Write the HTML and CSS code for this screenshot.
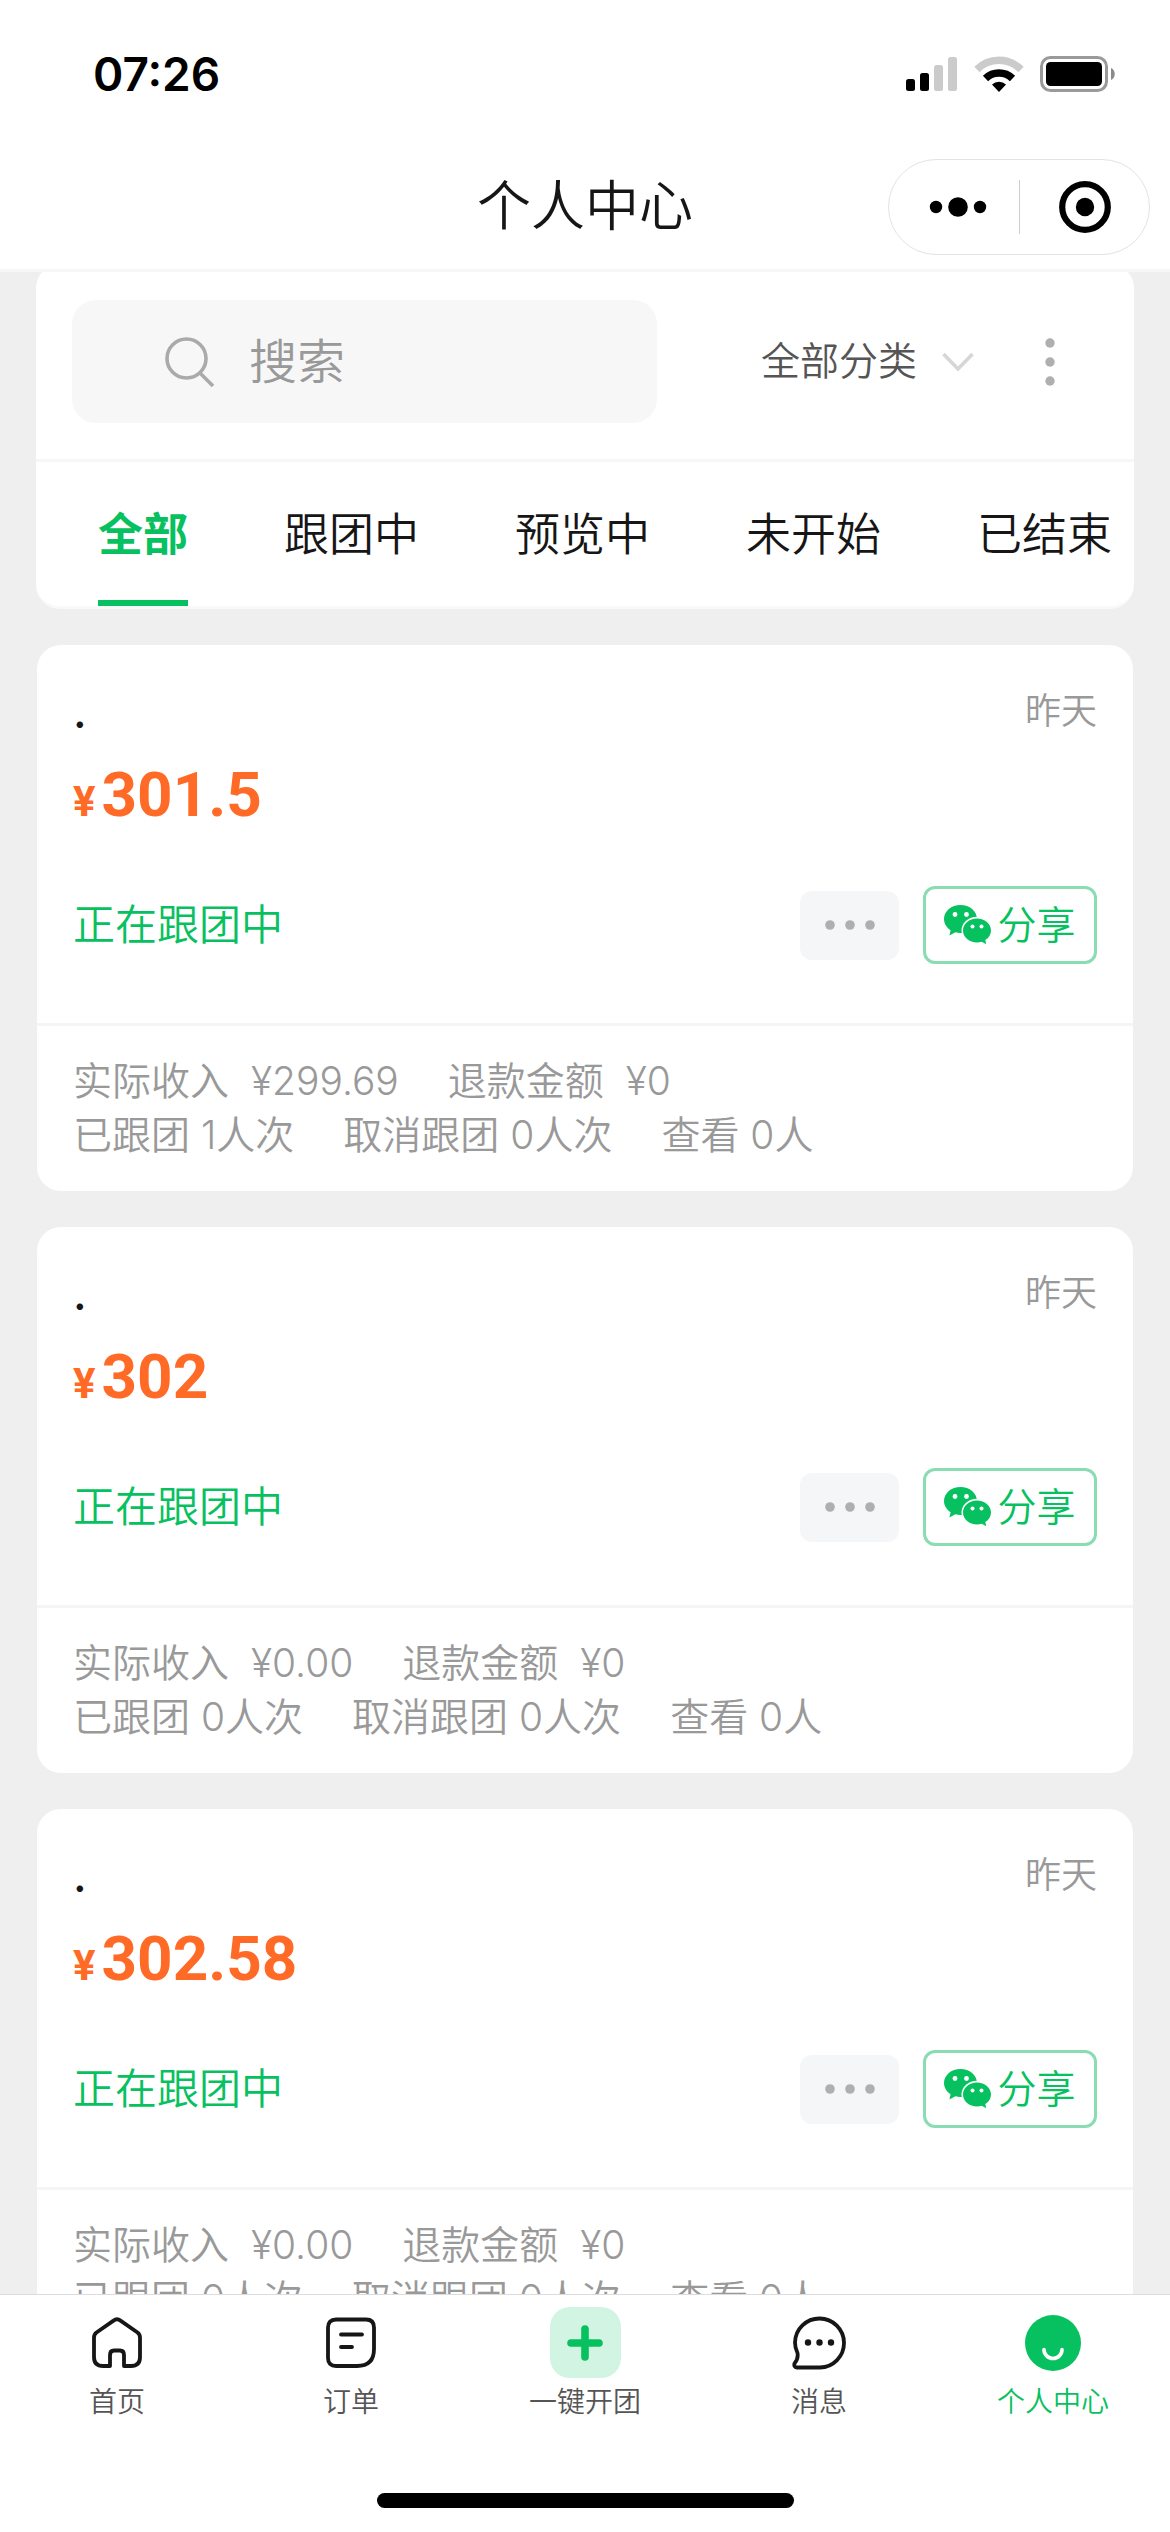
FILE: index.html
```html
<!DOCTYPE html>
<html lang="zh-CN">
<head>
    <meta charset="UTF-8">
    <meta name="viewport" content="width=device-width, initial-scale=1">
    <title>个人中心</title>
    <link rel="stylesheet" href="styles.css">
</head>
<body>
    <!-- shared icons -->
    <svg class="sprite" aria-hidden="true">
        <symbol id="icon-wechat" viewBox="0 0 48 40">
            <path d="M16.5 0C7.4 0 0 6.200 0 14c0 4.600 2.600 8.600 6.600 11.200L5.400 30.400l6-3.200c1.600.5 3.300.8 5.100.8C25.600 28 33 21.800 33 14S25.600 0 16.500 0z" fill="#07c160"/>
            <ellipse cx="33" cy="25.500" rx="15.500" ry="13.700" fill="#fff"/>
            <path d="M33 13.500c-7.700 0-14 5.400-14 12s6.300 12 14 12c1.700 0 3.300-.2 4.800-.7l4.400 2.400-.9-4.200C44.800 32.800 47 29.400 47 25.500c0-6.600-6.300-12-14-12z" fill="#07c160"/>
            <circle cx="11" cy="9.500" r="2.400" fill="#fff"/>
            <circle cx="22.500" cy="9.500" r="2.400" fill="#fff"/>
            <circle cx="28.500" cy="21.500" r="2" fill="#fff"/>
            <circle cx="37.500" cy="21.500" r="2" fill="#fff"/>
        </symbol>
        <symbol id="icon-dots" viewBox="0 0 50 10">
            <circle cx="5" cy="5" r="4.800"/>
            <circle cx="25" cy="5" r="4.800"/>
            <circle cx="45" cy="5" r="4.800"/>
        </symbol>
    </svg>

    <header class="header">
        <div class="status-bar">
            <span class="clock">07:26</span>
            <div class="status-icons">
                <svg width="52" height="36" viewBox="0 0 52 36">
                    <rect x="0" y="23" width="9" height="12" rx="2.500"/>
                    <rect x="14" y="17" width="9" height="18" rx="2.500"/>
                    <rect x="28" y="9" width="9" height="26" rx="2.500" fill="#cbcbcb"/>
                    <rect x="42" y="1" width="9" height="34" rx="2.500" fill="#cbcbcb"/>
                </svg>
                <svg width="50" height="38" viewBox="0 0 50 38">
                    <path d="M3 14.500a31 31 0 0 1 44 0" fill="none" stroke="#cbcbcb" stroke-width="7.500"/>
                    <path d="M11.500 23.500a19.500 19.500 0 0 1 27 0" fill="none" stroke="#000" stroke-width="7.500"/>
                    <path d="M25 37l-7-7.500a10 10 0 0 1 14 0z"/>
                </svg>
                <svg width="76" height="40" viewBox="0 0 76 40">
                    <rect x="1.500" y="3.500" width="65" height="33" rx="9" fill="none" stroke="#9a9a9a" stroke-width="3"/>
                    <rect x="6" y="8" width="56" height="24" rx="4.500"/>
                    <path d="M71 14c5 2 5 10 0 12z" fill="#8a8a8a"/>
                </svg>
            </div>
        </div>
        <div class="nav-bar">
            <h1>个人中心</h1>
            <div class="capsule">
                <button aria-label="更多">
                    <svg width="58" height="22" viewBox="0 0 58 22">
                        <circle cx="7" cy="11" r="6.200"/>
                        <circle cx="29" cy="11" r="9.800"/>
                        <circle cx="51" cy="11" r="6.200"/>
                    </svg>
                </button>
                <button aria-label="关闭">
                    <svg width="54" height="54" viewBox="0 0 54 54">
                        <circle cx="27" cy="27" r="22.800" fill="none" stroke="#000" stroke-width="6.200"/>
                        <circle cx="27" cy="27" r="9.200"/>
                    </svg>
                </button>
            </div>
        </div>
    </header>

    <main class="content">
        <section class="panel">
            <div class="filter-row">
                <label class="search">
                    <svg width="50" height="50" viewBox="0 0 50 50" fill="none" stroke="#aaa" stroke-width="3.600">
                        <circle cx="21.500" cy="21.500" r="19.500"/>
                        <path d="M35.500 36.500L48 49"/>
                    </svg>
                    <input type="text" placeholder="搜索" aria-label="搜索">
                </label>
                <label class="category">
                    <select aria-label="分类">
                        <option>全部分类</option>
                    </select>
                    <svg width="32" height="20" viewBox="0 0 32 20" fill="none" stroke="#d6d6d6" stroke-width="3.600">
                        <path d="M1.500 2L16 17 30.500 2"/>
                    </svg>
                </label>
                <button class="menu" aria-label="菜单">
                    <svg width="10" height="48" viewBox="0 0 10 48" fill="#afafaf">
                        <circle cx="5" cy="5" r="4.700"/>
                        <circle cx="5" cy="24" r="4.700"/>
                        <circle cx="5" cy="43" r="4.700"/>
                    </svg>
                </button>
            </div>
            <nav class="tabs">
                <button class="tab active">全部</button>
                <button class="tab">跟团中</button>
                <button class="tab">预览中</button>
                <button class="tab">未开始</button>
                <button class="tab">已结束</button>
            </nav>
        </section>

        <article class="card">
            <div class="card-main">
                <div class="card-head">
                    <h2>.</h2>
                    <time>昨天</time>
                </div>
                <p class="price"><small>¥</small>301.5</p>
                <div class="card-actions">
                    <span class="state">正在跟团中</span>
                    <button class="more" aria-label="更多操作"><svg width="50" height="10"><use href="#icon-dots"/></svg></button>
                    <button class="share"><svg width="48" height="40"><use href="#icon-wechat"/></svg>分享</button>
                </div>
            </div>
            <div class="card-stats">
                <p><span>实际收入&nbsp; ¥299.69</span><span>退款金额&nbsp; ¥0</span></p>
                <p><span>已跟团 1人次</span><span>取消跟团 0人次</span><span>查看 0人</span></p>
            </div>
        </article>

        <article class="card">
            <div class="card-main">
                <div class="card-head">
                    <h2>.</h2>
                    <time>昨天</time>
                </div>
                <p class="price"><small>¥</small>302</p>
                <div class="card-actions">
                    <span class="state">正在跟团中</span>
                    <button class="more" aria-label="更多操作"><svg width="50" height="10"><use href="#icon-dots"/></svg></button>
                    <button class="share"><svg width="48" height="40"><use href="#icon-wechat"/></svg>分享</button>
                </div>
            </div>
            <div class="card-stats">
                <p><span>实际收入&nbsp; ¥0.00</span><span>退款金额&nbsp; ¥0</span></p>
                <p><span>已跟团 0人次</span><span>取消跟团 0人次</span><span>查看 0人</span></p>
            </div>
        </article>

        <article class="card">
            <div class="card-main">
                <div class="card-head">
                    <h2>.</h2>
                    <time>昨天</time>
                </div>
                <p class="price"><small>¥</small>302.58</p>
                <div class="card-actions">
                    <span class="state">正在跟团中</span>
                    <button class="more" aria-label="更多操作"><svg width="50" height="10"><use href="#icon-dots"/></svg></button>
                    <button class="share"><svg width="48" height="40"><use href="#icon-wechat"/></svg>分享</button>
                </div>
            </div>
            <div class="card-stats">
                <p><span>实际收入&nbsp; ¥0.00</span><span>退款金额&nbsp; ¥0</span></p>
                <p><span>已跟团 0人次</span><span>取消跟团 0人次</span><span>查看 0人</span></p>
            </div>
        </article>
    </main>

    <footer class="footer">
        <nav class="tab-bar">
            <a href="#home">
                <span class="icon">
                    <svg width="54" height="54" viewBox="0 0 54 54" fill="none" stroke="#161616" stroke-width="3.800" stroke-linejoin="round">
                        <path d="M23.500 4.600Q27 2 30.500 4.600L47.500 16.500Q50 18.500 50 21.500V41Q50 50 41 50H34V39Q34 34.500 30 34.500H24Q20 34.500 20 39V50H13Q4 50 4 41V21.500Q4 18.500 6.500 16.500Z"/>
                    </svg>
                </span>
                首页
            </a>
            <a href="#orders">
                <span class="icon">
                    <svg width="54" height="54" viewBox="0 0 54 54" fill="none" stroke="#161616" stroke-width="3.800" stroke-linecap="round">
                        <path d="M12 3.500H42Q50 3.500 50 11.500V33Q50 50 33 50H12Q4 50 4 42V11.500Q4 3.500 12 3.500Z"/>
                        <path d="M17 18.500H38M17 31H28"/>
                    </svg>
                </span>
                订单
            </a>
            <a href="#create">
                <span class="icon plus">
                    <svg width="36" height="36" viewBox="0 0 36 36" stroke="#07c160" stroke-width="7.600" stroke-linecap="round">
                        <path d="M18 4V32M4 18H32"/>
                    </svg>
                </span>
                一键开团
            </a>
            <a href="#messages">
                <span class="icon">
                    <svg width="54" height="54" viewBox="0 0 54 54" fill="none" stroke="#161616" stroke-width="3.800" stroke-linejoin="round">
                        <path d="M28 51.500H5Q1.500 51 2.500 47.500Q6.500 43 5.500 37Q3 32 3 26.500A24.500 24.500 0 1 1 28 51.500Z"/>
                        <g fill="#161616" stroke="none">
                            <circle cx="16" cy="26.500" r="3.200"/>
                            <circle cx="27.500" cy="26.500" r="3.200"/>
                            <circle cx="39" cy="26.500" r="3.200"/>
                        </g>
                    </svg>
                </span>
                消息
            </a>
            <a href="#me" class="current">
                <span class="icon">
                    <svg width="56" height="56" viewBox="0 0 56 56">
                        <circle cx="28" cy="28" r="28" fill="#07c160"/>
                        <path d="M19 34.500a9 9 0 0 0 18 0" fill="none" stroke="#fff" stroke-width="3.600" stroke-linecap="round"/>
                    </svg>
                </span>
                个人中心
            </a>
        </nav>
        <div class="home-indicator"></div>
    </footer>
</body>
</html>
```

FILE: styles.css
```css
* {
    box-sizing: border-box;
    margin: 0;
    padding: 0;
}
body {
    display: flex;
    flex-direction: column;
    height: 100vh;
    background: #efefef;
    color: #161616;
    font-family: Inter, "Noto Sans CJK SC", sans-serif;
    font-weight: 350;
    line-height: 1.4;
}
button,
input,
select {
    border: none;
    background: none;
    color: inherit;
    font: inherit;
}
svg {
    display: block;
    flex: none;
}
.sprite {
    position: absolute;
    width: 0;
    height: 0;
}

/* header */
.header {
    flex: none;
    background: #fff;
    border-bottom: 3px solid #f7f7f7;
}
.status-bar {
    display: flex;
    justify-content: space-between;
    align-items: center;
    height: 144px;
    padding: 4px 54px 0 93px;
    color: #000;
}
.clock {
    font-size: 46px;
    font-weight: 600;
}
.status-icons {
    display: flex;
    align-items: center;
    gap: 16px;
}
.nav-bar {
    display: grid;
    grid-template-columns: 1fr auto 1fr;
    align-items: center;
    height: 125px;
    padding: 0 20px;
}
.nav-bar h1 {
    grid-column: 2;
    font-size: 54px;
    font-weight: 350;
}
.capsule {
    display: flex;
    justify-self: end;
    width: 262px;
    height: 96px;
    border: 1px solid #e3e3e3;
    border-radius: 48px;
}
.capsule button {
    display: flex;
    flex: 0 0 50%;
    justify-content: center;
    align-items: center;
    margin: 20px 0;
}
.capsule button:first-child {
    padding-left: 8px;
}
.capsule button + button {
    border-left: 1px solid #ccc;
}

/* list */
.content {
    flex: 1;
    min-height: 0;
    overflow: hidden;
}
.panel {
    margin: -8px 36px 36px;
    background: #fff;
    border-bottom: 3px solid #f9f9f9;
    border-radius: 24px;
    overflow: hidden;
}
.filter-row {
    display: flex;
    align-items: center;
    padding: 36px;
    border-bottom: 3px solid #f7f7f7;
}
.search {
    display: flex;
    align-items: center;
    gap: 34px;
    width: 57%;
    height: 123px;
    margin-right: auto;
    padding-left: 93px;
    background: #f7f7f7;
    border-radius: 24px;
}
.search input {
    flex: 1;
    min-width: 0;
    font-size: 48px;
    outline: none;
}
.search input::placeholder {
    color: #999;
}
.category {
    display: flex;
    align-items: center;
    gap: 24px;
    padding-right: 28px;
    color: #555;
}
.category select {
    appearance: none;
    font-size: 39px;
}
.menu {
    display: flex;
    justify-content: center;
    width: 96px;
}
.tabs {
    display: flex;
    gap: 96px;
    padding: 0 24px 0 62px;
}
.tab {
    flex: none;
    height: 144px;
    border-top: 6px solid transparent;
    border-bottom: 6px solid transparent;
    font-size: 45px;
}
.tab.active {
    border-bottom-color: #07c160;
    color: #07c160;
    font-weight: 700;
}

/* cards */
.card {
    margin: 0 37px 36px;
    background: #fff;
    border-radius: 24px;
}
.card-main {
    padding: 36px 36px 59px;
    border-bottom: 3px solid #f5f5f5;
}
.card-head {
    display: flex;
    justify-content: space-between;
    align-items: center;
    height: 60px;
}
.card-head h2 {
    font-size: 45px;
    font-weight: 500;
}
.card-head time {
    color: #999;
    font-size: 36px;
}
.price {
    margin-bottom: 37px;
    color: #ff6a26;
    font-family: Roboto, sans-serif;
    font-size: 62px;
    font-weight: 700;
    line-height: 108px;
}
.price small {
    margin-right: 6px;
    font-size: 42px;
    line-height: 1;
}
.card-actions {
    display: flex;
    align-items: center;
    gap: 24px;
}
.state {
    flex: 1;
    color: #07c160;
    font-size: 42px;
}
.more {
    display: flex;
    justify-content: center;
    align-items: center;
    width: 99px;
    height: 69px;
    background: #f5f6f8;
    border-radius: 12px;
    fill: #afafaf;
}
.share {
    display: flex;
    justify-content: center;
    align-items: center;
    gap: 5px;
    width: 174px;
    height: 78px;
    border: 3px solid #8adcb2;
    border-radius: 12px;
    color: #07c160;
    font-size: 39px;
}
.card-stats {
    padding: 28px 36px 29px;
    color: #999;
    font-size: 39px;
    line-height: 54px;
}
.card-stats p {
    display: flex;
    gap: 49px;
}

/* bottom bar */
.footer {
    flex: none;
    background: #fff;
    border-top: 1px solid #ddd;
}
.tab-bar {
    display: flex;
    padding: 12px 0 71px;
}
.tab-bar a {
    display: flex;
    flex: 1;
    flex-direction: column;
    align-items: center;
    gap: 4px;
    color: #555;
    font-size: 28px;
    line-height: 40px;
    text-decoration: none;
}
.tab-bar .current {
    color: #07c160;
}
.icon {
    display: flex;
    justify-content: center;
    align-items: center;
    width: 71px;
    height: 71px;
}
.plus {
    background: #d2f4e2;
    border-radius: 20px;
}
.home-indicator {
    width: 417px;
    height: 15px;
    margin: 0 auto 24px;
    background: #000;
    border-radius: 8px;
}
```
